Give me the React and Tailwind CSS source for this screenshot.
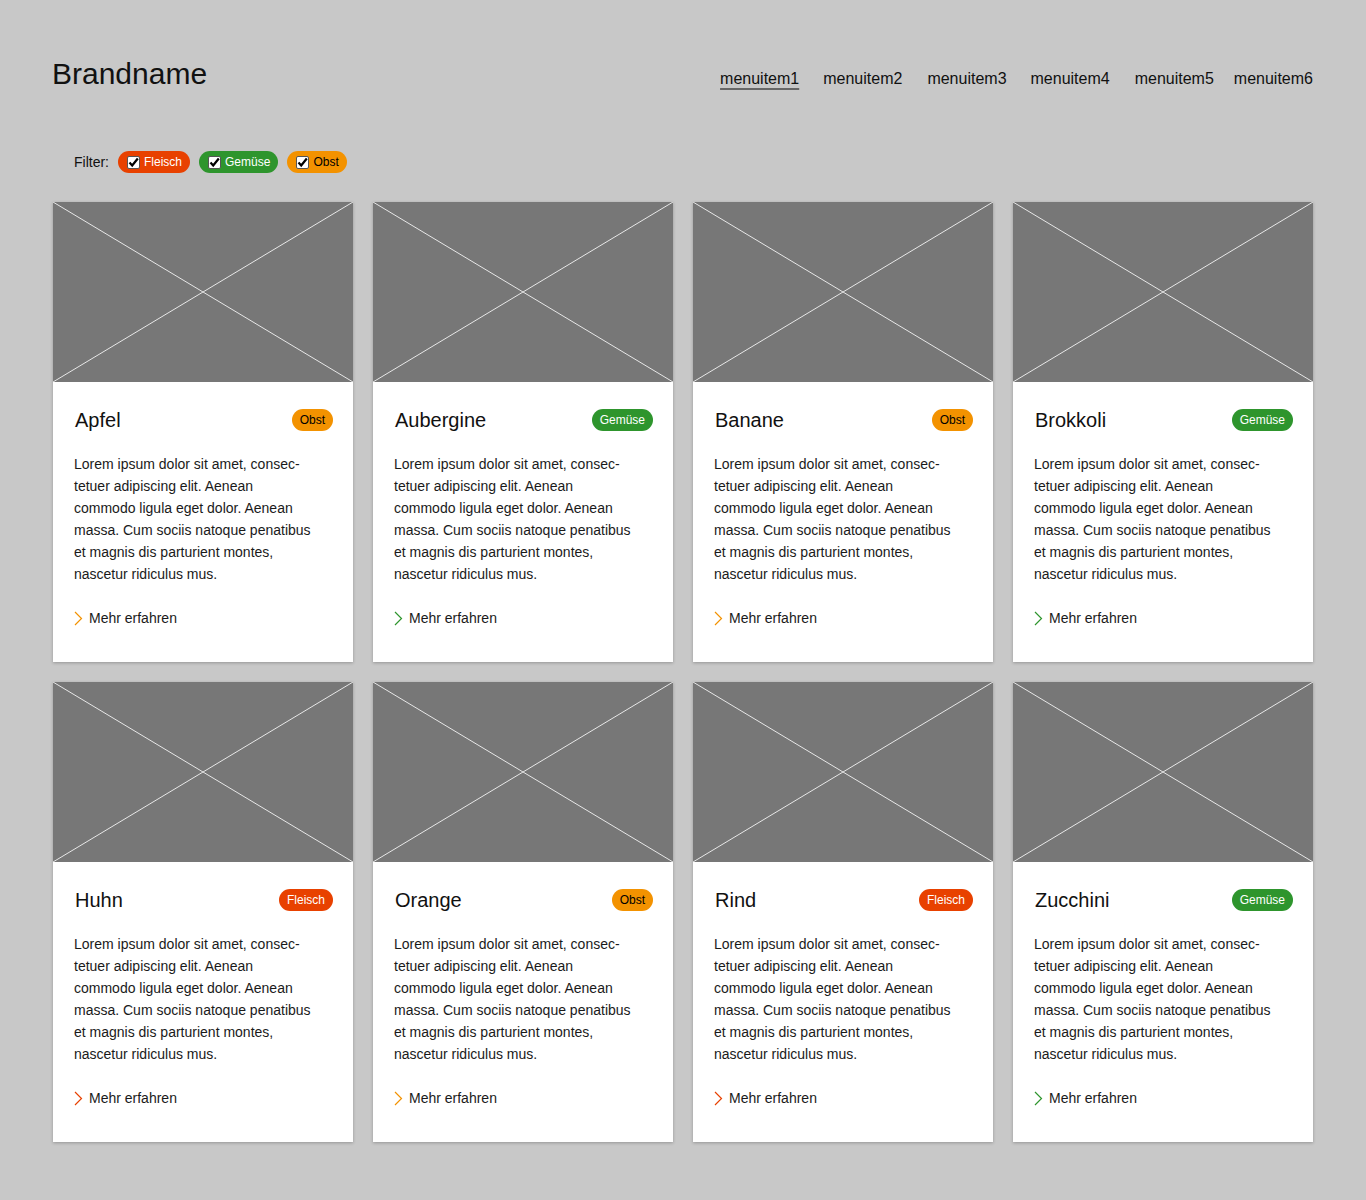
import React from "react";

const CAT = {
  Obst: { bg: "bg-[#f39200]", text: "text-black", stroke: "#f39200" },
  "Gemüse": { bg: "bg-[#2e952d]", text: "text-white", stroke: "#2e952d" },
  Fleisch: { bg: "bg-[#e84100]", text: "text-white", stroke: "#e84100" },
};

const items = [
  ["Apfel", "Obst"],
  ["Aubergine", "Gemüse"],
  ["Banane", "Obst"],
  ["Brokkoli", "Gemüse"],
  ["Huhn", "Fleisch"],
  ["Orange", "Obst"],
  ["Rind", "Fleisch"],
  ["Zucchini", "Gemüse"],
];

const lines = [
  "Lorem ipsum dolor sit amet, consec-",
  "tetuer adipiscing elit. Aenean",
  "commodo ligula eget dolor. Aenean",
  "massa. Cum sociis natoque penatibus",
  "et magnis dis parturient montes,",
  "nascetur ridiculus mus.",
];

function Check() {
  return (
    <span className="flex h-[13px] w-[13px] items-center justify-center rounded-[2px] border border-[#555] bg-white">
      <svg width="11" height="11" viewBox="0 0 11 11">
        <polyline points="1.5,5.5 4.2,8.5 9.8,1.5" fill="none" stroke="#000" strokeWidth="2.2" />
      </svg>
    </span>
  );
}

function Pill({ cat }) {
  const c = CAT[cat];
  return (
    <span className={`flex h-[22px] items-center gap-[4px] rounded-full pl-[9px] pr-[8px] text-[12px] ${c.bg} ${c.text}`}>
      <Check />
      <span>{cat}</span>
    </span>
  );
}

function Card({ name, cat }) {
  const c = CAT[cat];
  return (
    <div className="flex h-[460px] w-[300px] flex-col bg-white shadow-[0_1px_3px_rgba(0,0,0,0.25)]">
      <div className="h-[180px] w-full bg-[#777777]">
        <svg width="300" height="180" viewBox="0 0 300 180" preserveAspectRatio="none" className="block">
          <line x1="0" y1="0" x2="300" y2="180" stroke="#e6e6e6" strokeWidth="1" />
          <line x1="300" y1="0" x2="0" y2="180" stroke="#e6e6e6" strokeWidth="1" />
        </svg>
      </div>
      <div className="flex flex-col pl-[21px] pr-[20px] pt-[26px]">
        <div className="flex h-[24px] items-center justify-between">
          <span className="pl-[1px] text-[20px] leading-[24px] text-[#111]">{name}</span>
          <span className={`flex h-[22px] items-center rounded-full px-[8px] text-[12px] ${c.bg} ${c.text}`}>{cat}</span>
        </div>
        <p className="mt-[21px] text-[14px] leading-[22px] text-[#1a1a1a]">
          {lines.map((l, i) => (
            <React.Fragment key={i}>
              {l}
              {i < lines.length - 1 && <br />}
            </React.Fragment>
          ))}
        </p>
        <div className="mt-[22px] flex h-[22px] items-center gap-[6px] text-[14px] text-[#1a1a1a]">
          <svg width="9" height="15" viewBox="0 0 9 15" className="block">
            <polyline points="1,1 7.5,7.5 1,14" fill="none" stroke={c.stroke} strokeWidth="1.2" />
          </svg>
          <span>Mehr erfahren</span>
        </div>
      </div>
    </div>
  );
}

export default function App() {
  const menu = ["menuitem1", "menuitem2", "menuitem3", "menuitem4", "menuitem5", "menuitem6"];
  const ml = ["", "ml-[24px]", "ml-[25px]", "ml-[24px]", "ml-[25px]", "ml-[20px]"];
  return (
    <div
      className="min-h-[1200px] w-full bg-[#c8c8c8] pl-[53px] pr-[53px] pt-[56px]"
      style={{ fontFamily: '"Liberation Sans", Arial, sans-serif' }}
    >
      <div className="flex items-baseline justify-between">
        <div className="ml-[-1px] text-[30px] leading-[36px] text-[#111]">Brandname</div>
        <nav className="flex items-baseline text-[16px] text-[#111]">
          {menu.map((m, i) => (
            <span
              key={m}
              className={`${ml[i]} ${i === 0 ? "underline decoration-[#666] decoration-2 underline-offset-[4px]" : ""}`}
            >
              {m}
            </span>
          ))}
        </nav>
      </div>
      <div className="mt-[59px] flex items-center gap-[9px] pl-[21px]">
        <span className="text-[14px] text-[#111]">Filter:</span>
        <Pill cat="Fleisch" />
        <Pill cat="Gemüse" />
        <Pill cat="Obst" />
      </div>
      <div className="mt-[29px] grid w-[1260px] grid-cols-4 gap-[20px]">
        {items.map(([n, c]) => (
          <Card key={n} name={n} cat={c} />
        ))}
      </div>
    </div>
  );
}
